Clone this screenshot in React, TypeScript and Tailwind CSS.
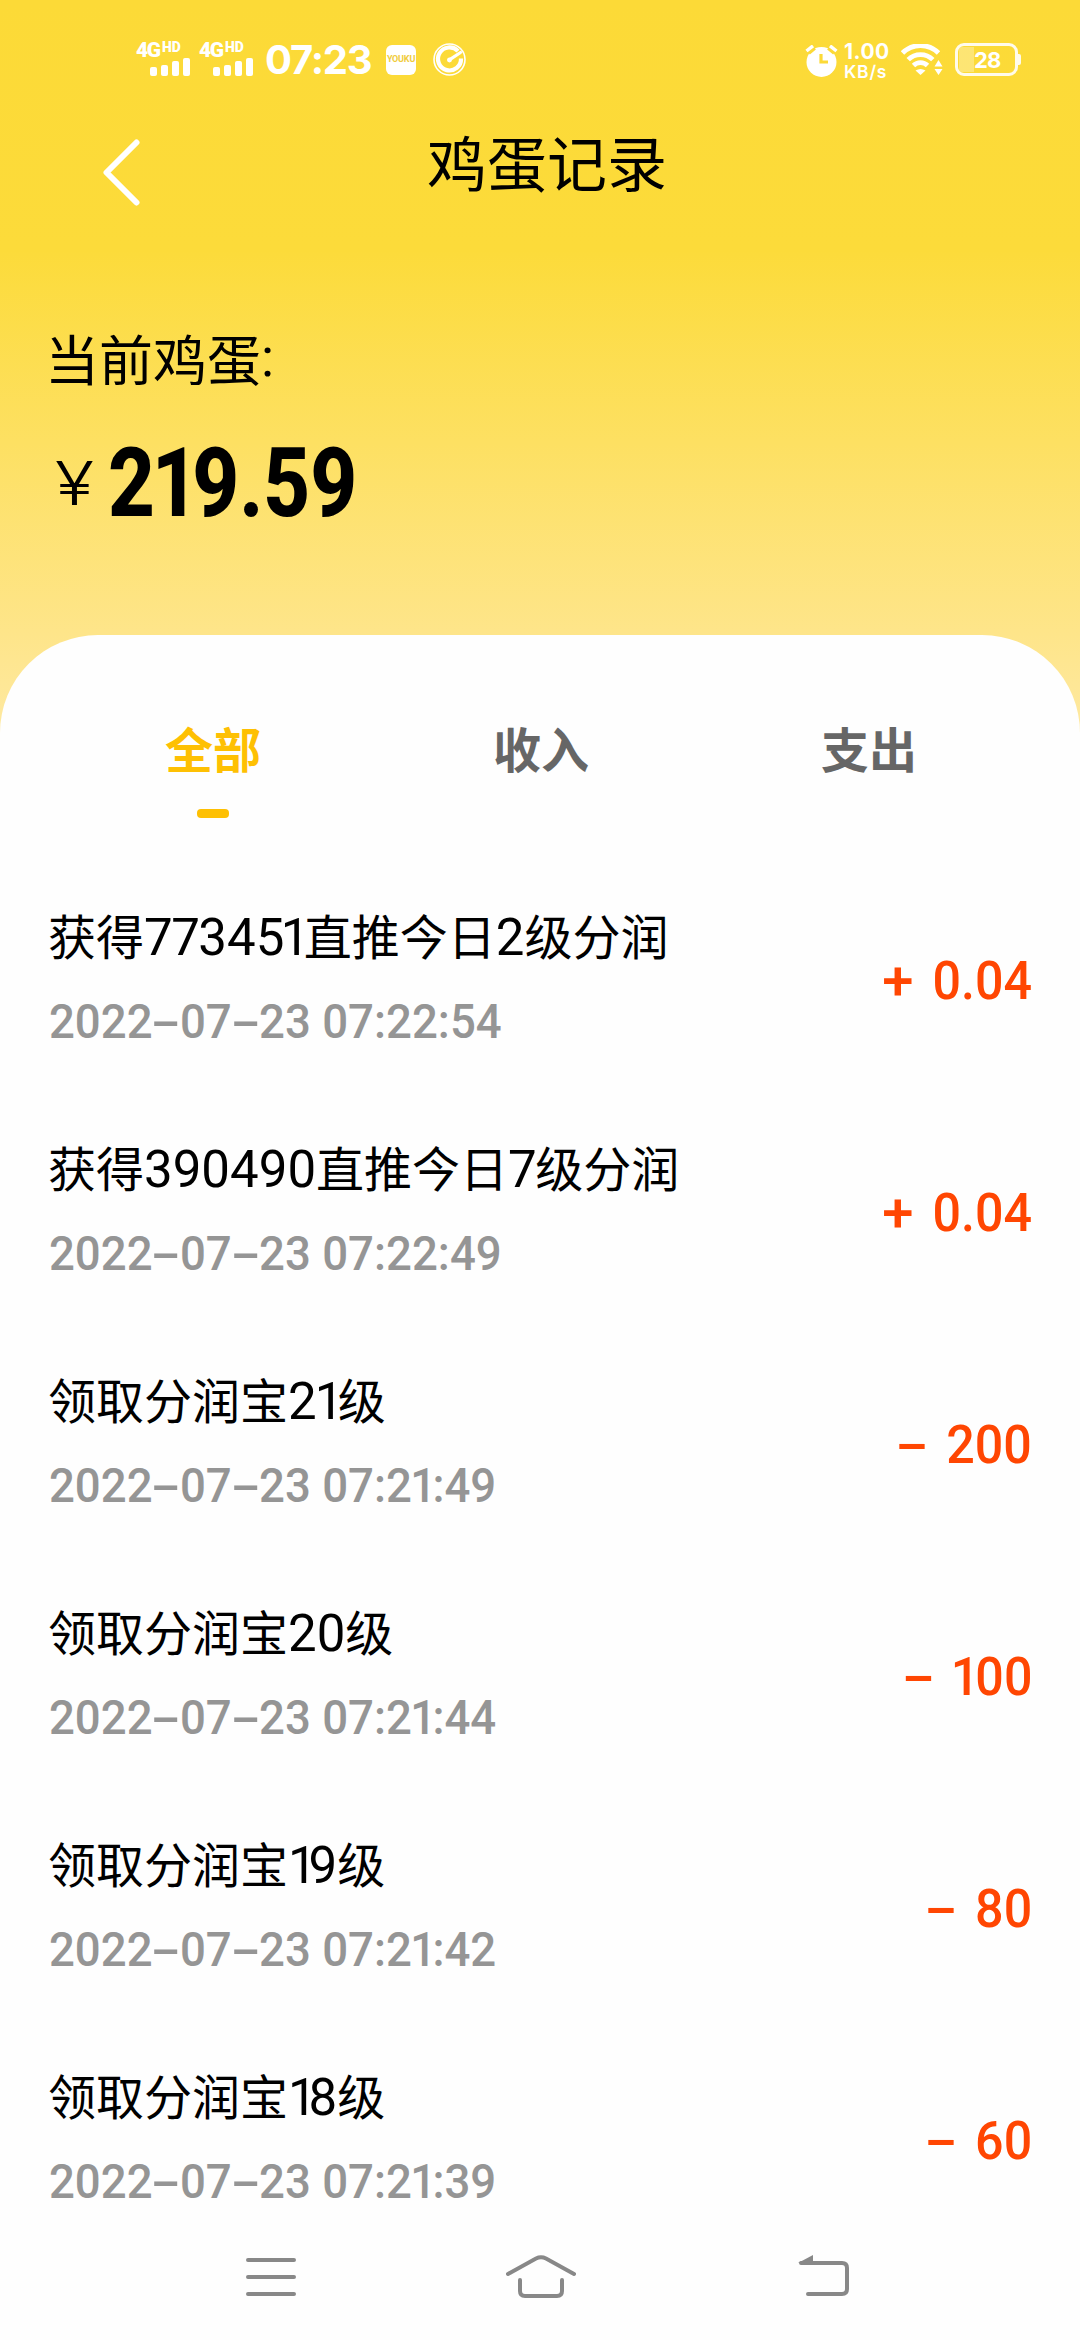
import React from "react";

const records = [
  { title: "获得773451直推今日2级分润", time: "2022-07-23 07:22:54", amount: "+ 0.04" },
  { title: "获得390490直推今日7级分润", time: "2022-07-23 07:22:49", amount: "+ 0.04" },
  { title: "领取分润宝21级", time: "2022-07-23 07:21:49", amount: "- 200" },
  { title: "领取分润宝20级", time: "2022-07-23 07:21:44", amount: "- 100" },
  { title: "领取分润宝19级", time: "2022-07-23 07:21:42", amount: "- 80" },
  { title: "领取分润宝18级", time: "2022-07-23 07:21:39", amount: "- 60" },
];

// Digits with a narrow "1", a long dash and a wide plus.
function Digits({ text }: { text: string }) {
  return (
    <>
      {Array.from(text).map((ch, i) => {
        if (ch === "1") return <span key={i} className="ml-[-0.04em] tracking-[-0.08em]">1</span>;
        if (ch === "-") return <span key={i} className="inline-block w-[0.6em] scale-x-[1.95] text-center">-</span>;
        if (ch === "+") return <span key={i} className="inline-block w-[0.62em] scale-x-[1.12] text-center">+</span>;
        return ch;
      })}
    </>
  );
}

function Title({ text }: { text: string }) {
  return (
    <div className="flex h-[60px] whitespace-nowrap text-[48px] leading-[60px] text-black">
      {text.split(/(\d+)/).map((part, i) =>
        /^\d+$/.test(part) ? (
          <span key={i} className="pt-[4px] font-[Roboto] text-[51px] font-normal">
            {Array.from(part).map((ch, j) => {
              if (ch === "1")
                return (
                  <span key={j} className={j > 0 ? "ml-[-0.04em] tracking-[-0.11em]" : "tracking-[-0.16em]"}>
                    1
                  </span>
                );
              if (ch === "7" || ch === "5") return <span key={j} className="tracking-[-0.03em]">{ch}</span>;
              return ch;
            })}
          </span>
        ) : (
          <span key={i}>{part}</span>
        )
      )}
    </div>
  );
}

function Signal() {
  return (
    <div className="h-[36px] w-[54px]">
      <div className="flex h-[16px] items-start font-[Roboto] font-black leading-none">
        <span className="w-[26px] text-[21px] leading-[16px] tracking-[-1.5px]">4G</span>
        <span className="text-[14px] leading-[11px]">HD</span>
      </div>
      <div className="flex h-[18px] items-end gap-[4px] pl-[14px]">
        <i className="h-[9px] w-[7px] rounded-[2px] bg-white" />
        <i className="h-[11px] w-[7px] rounded-[2px] bg-white" />
        <i className="h-[15px] w-[7px] rounded-[2px] bg-white" />
        <i className="h-[18px] w-[7px] rounded-[2px] bg-white" />
      </div>
    </div>
  );
}

function StatusBar() {
  return (
    <div className="flex h-[120px] items-start justify-between pl-[136px] pr-[59px] pt-[42px] text-white">
      <div className="flex">
        <Signal />
        <div className="w-[9px]" />
        <Signal />
        <div className="ml-[12px] w-[107px] whitespace-nowrap font-[Inter] text-[40px] font-bold leading-[36px] tracking-[-1.2px]">07:23</div>
        <div className="ml-[14px] mt-[3px] flex h-[30px] w-[30px] items-center justify-center rounded-[6px] bg-white font-[Roboto] text-[9px] font-bold tracking-[-0.2px] text-[#f0cc3c]">
          YOUKU
        </div>
        <svg className="ml-[17px] mt-px" width="33" height="33" viewBox="0 0 33 33" fill="none" stroke="white">
          <circle cx="16.5" cy="16.5" r="15.5" strokeWidth="1.600" />
          <path d="M25 8.200A11.500 11.500 0 1 0 28 15.500" strokeWidth="4.200" />
          <path d="M27.500 9.500L16 17.200" strokeWidth="3.200" strokeLinecap="round" />
          <circle cx="16.500" cy="17" r="2.400" fill="white" stroke="none" />
        </svg>
      </div>
      <div className="flex">
        <svg className="mt-[3px]" width="33" height="33" viewBox="0 0 33 33" fill="none">
          <circle cx="16.5" cy="17" r="15" fill="white" />
          <path d="M2 6L8 1M31 6L25 1" stroke="#fcda37" strokeWidth="9" />
          <path d="M1.500 6L8 .8M31.500 6L25 .8" stroke="white" strokeWidth="3.400" />
          <path d="M16 9v8h7" stroke="#fcda37" strokeWidth="3.200" />
        </svg>
        <div className="ml-[6px] w-[46px] whitespace-nowrap font-[Inter] font-bold">
          <div className="text-[21px] leading-[20px] tracking-[0.500px]">1.00</div>
          <div className="mt-px text-[17.500px] font-semibold leading-[18px] tracking-[0.800px]">KB/s</div>
        </div>
        <svg className="ml-[11px] mt-[2px]" width="43" height="32" viewBox="0 0 43 32" fill="none" stroke="white" strokeWidth="4.800">
          <path d="M1.500 9A25.500 25.500 0 0 1 37.500 9" />
          <path d="M7.200 15.600A17.500 17.500 0 0 1 31.800 15.600" />
          <path d="M12.500 21.500A10 10 0 0 1 26.500 21.500" />
          <path d="M19.500 31L14.500 26.500Q19.500 23.500 24.500 26.500Z" fill="white" stroke="none" />
          <path d="M37.500 16L41.500 22.500H33.500ZM37.500 31L41.500 25H33.500Z" fill="white" stroke="none" />
        </svg>
        <div className="ml-[11px] flex h-[35px] items-center">
          <div className="flex h-[33px] w-[63px] items-center rounded-[9px] border-[3px] border-white/90 p-px">
            <div className="h-[25px] w-[15px] rounded-l-[3px] bg-white/30" />
            <div className="font-[Inter] text-[22px] font-bold leading-none tracking-[-0.800px]">28</div>
          </div>
          <div className="h-[11px] w-[3px] rounded-r-[2px] bg-white/90" />
        </div>
      </div>
    </div>
  );
}

export default function App() {
  return (
    <div className="flex h-[2340px] w-[1080px] flex-col overflow-hidden bg-[#fefefe] font-['Noto_Sans_CJK_SC',sans-serif]">
      <header className="h-[735px] shrink-0 bg-[linear-gradient(to_bottom,#fcda37_0px,#fcdb3a_250px,#fee58a_635px,#fee9a2_735px)]">
        <StatusBar />
        <div className="flex h-[90px] items-start pl-[103px]">
          <svg className="mt-[19px]" width="37" height="67" viewBox="0 0 37 67" fill="none" stroke="white" strokeWidth="6" strokeLinecap="round" strokeLinejoin="round">
            <path d="M33.500 3.500L3.500 33.500L33.500 63.500" />
          </svg>
          <h1 className="ml-[287px] text-[60px] leading-[82px] text-black">鸡蛋记录</h1>
        </div>
        <div className="mt-[114px] flex h-[68px] pl-[45px] text-[54px] leading-[68px] text-black">
          当前鸡蛋<span className="font-[Roboto]">:</span>
        </div>
        <div className="mt-[36px] flex h-[110px] items-center pl-[55px] text-black">
          <span className="w-[53px] origin-left scale-x-[1.2] font-[Inter] text-[60px] font-light leading-[110px]">¥</span>
          <span className="origin-left scale-x-[0.84] font-[Roboto] text-[97px] font-extrabold leading-[110px]">
            <Digits text="219.59" />
          </span>
        </div>
      </header>

      <main className="-mt-[100px] flex-1 rounded-t-[98px] bg-[#fefefe]">
        <nav className="grid h-[230px] grid-cols-3 pl-[49px] pr-[47px] pt-[78px] text-[48px] font-bold leading-[68px] text-[#666]">
          <div className="flex flex-col items-center text-[#fec003]">
            全部
            <div className="mt-[28px] h-[9px] w-[32px] rounded-[4px] bg-[#fec003]" />
          </div>
          <div className="text-center">收入</div>
          <div className="text-center">支出</div>
        </nav>
        <ul>
          {records.map((r) => (
            <li key={r.time} className="flex h-[232px] items-center justify-between pl-[48px] pr-[48px]">
              <div className="flex flex-col gap-[27px] pb-[7px]">
                <Title text={r.title} />
                <div className="h-[60px] origin-left scale-x-[0.93] whitespace-nowrap pl-px pt-px font-[Roboto] text-[49px] font-medium leading-[60px] text-[#959595]">
                  <Digits text={r.time} />
                </div>
              </div>
              <div className="origin-right scale-x-[0.93] whitespace-nowrap font-[Roboto] text-[54px] font-medium leading-[60px] text-[#ff4602] [word-spacing:7px]">
                <Digits text={r.amount} />
              </div>
            </li>
          ))}
        </ul>
      </main>

      <footer className="-mt-[83px] flex h-[126px] shrink-0 items-center bg-[#fefefe] text-[#888]">
        <svg className="ml-[246px]" width="50" height="44" viewBox="0 0 50 44" fill="none" stroke="currentColor" strokeWidth="4" strokeLinecap="round">
          <path d="M2 5H48M2 22H48M2 39H48" />
        </svg>
        <svg className="ml-[210px]" width="70" height="44" viewBox="0 0 70 44" fill="none" stroke="currentColor" strokeWidth="4" strokeLinecap="round">
          <path d="M2 19L30 3.500Q35 1 40 3.500L68 19M14 25V36Q14 41 19 41H51Q56 41 56 36V25" />
        </svg>
        <svg className="ml-[222px]" width="52" height="44" viewBox="0 0 52 44" fill="none" stroke="currentColor" strokeWidth="4" strokeLinecap="round">
          <path d="M3 8H44Q49 8 49 13V34Q49 39 44 39H10" />
          <path d="M0 8L15 0V8Z" fill="currentColor" stroke="none" />
        </svg>
      </footer>
    </div>
  );
}
